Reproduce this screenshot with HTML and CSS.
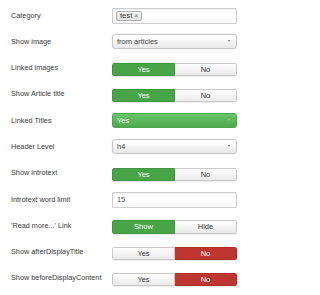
FILE: index.html
```html
<!DOCTYPE html>
<html>
<head>
<meta charset="utf-8">
<link rel="stylesheet" href="styles.css">
</head>
<body>
<div class="form">
  <div class="row">
    <div class="label">Category</div>
    <div class="control"><div class="input tags"><span class="tag">test <span class="x">×</span></span></div></div>
  </div>
  <div class="row">
    <div class="label">Show image</div>
    <div class="control"><div class="select">from articles<span class="caret"></span></div></div>
  </div>
  <div class="row">
    <div class="label">Linked images</div>
    <div class="control"><div class="toggle"><span class="btn yes-on">Yes</span><span class="btn off">No</span></div></div>
  </div>
  <div class="row">
    <div class="label">Show Article title</div>
    <div class="control"><div class="toggle"><span class="btn yes-on">Yes</span><span class="btn off">No</span></div></div>
  </div>
  <div class="row">
    <div class="label">Linked Titles</div>
    <div class="control"><div class="select green">Yes<span class="caret light"></span></div></div>
  </div>
  <div class="row">
    <div class="label">Header Level</div>
    <div class="control"><div class="select">h4<span class="caret"></span></div></div>
  </div>
  <div class="row">
    <div class="label">Show introtext</div>
    <div class="control"><div class="toggle"><span class="btn yes-on">Yes</span><span class="btn off">No</span></div></div>
  </div>
  <div class="row">
    <div class="label">Introtext word limit</div>
    <div class="control"><div class="input">15</div></div>
  </div>
  <div class="row">
    <div class="label">'Read more...' Link</div>
    <div class="control"><div class="toggle"><span class="btn yes-on">Show</span><span class="btn off">Hide</span></div></div>
  </div>
  <div class="row">
    <div class="label">Show afterDisplayTitle</div>
    <div class="control"><div class="toggle"><span class="btn off">Yes</span><span class="btn no-on">No</span></div></div>
  </div>
  <div class="row">
    <div class="label">Show beforeDisplayContent</div>
    <div class="control"><div class="toggle"><span class="btn off">Yes</span><span class="btn no-on">No</span></div></div>
  </div>
</div>
</body>
</html>
```
FILE: styles.css
```css
html, body {
  margin: 0;
  padding: 0;
  background: #fff;
}
.form {
  padding: 7.5px 13px 0 11px;
  font-family: "Liberation Sans", Arial, sans-serif;
  font-size: 7.3px;
  color: #3a3a3a;
}
.row {
  display: flex;
  height: 26.3px;
  align-items: flex-start;
}
.label {
  width: 101px;
  line-height: 15px;
  white-space: nowrap;
}
.control {
  width: 125px;
}
.input {
  box-sizing: border-box;
  height: 15.5px;
  border: 1px solid #ccc;
  border-radius: 1px;
  background: #fff;
  box-shadow: inset 0 1px 1px rgba(0,0,0,0.06);
  padding: 0 4px;
  line-height: 13.5px;
  font-size: 7.4px;
  color: #555;
  margin-top: 0.5px;
}
.tags {
  display: flex;
  align-items: center;
  padding: 0 3px;
  height: 16px;
}
.tag {
  display: inline-block;
  box-sizing: border-box;
  border: 1px solid #b0b0b0;
  border-radius: 2px;
  background: linear-gradient(#f6f6f6, #e2e2e2);
  padding: 0 3px;
  height: 10px;
  line-height: 8px;
  font-size: 7.6px;
  color: #333;
}
.tag .x {
  font-size: 6.5px;
  color: #666;
}
.select {
  position: relative;
  box-sizing: border-box;
  height: 15px;
  border: 1px solid #c6c6c6;
  border-radius: 3px;
  background: linear-gradient(#fff 20%, #f2f2f2 60%, #e8e8e8);
  box-shadow: 0 0 2px rgba(0,0,0,0.08);
  padding: 0 4px;
  line-height: 13px;
  font-size: 7.5px;
  color: #444;
}
.select.green {
  border-color: #4aa84a;
  background: linear-gradient(#6ac56a, #4fa84f);
  color: #fff;
  text-shadow: 0 -1px 0 rgba(0,0,0,0.2);
  box-shadow: none;
}
.caret {
  position: absolute;
  right: 6px;
  top: 5.5px;
  width: 0;
  height: 0;
  border-left: 1.5px solid transparent;
  border-right: 1.5px solid transparent;
  border-top: 2.5px solid #777;
}
.caret.light {
  border-top-color: rgba(255,255,255,0.35);
}
.toggle {
  display: flex;
  height: 13.5px;
  margin-top: 2.5px;
  border-radius: 2px;
  overflow: hidden;
  box-shadow: 0 1px 1px rgba(0,0,0,0.08);
}
.btn {
  box-sizing: border-box;
  flex: 1 1 0;
  text-align: center;
  line-height: 11.5px;
  font-size: 7.5px;
  border: 1px solid #ccc;
}
.btn:first-child {
  border-radius: 2px 0 0 2px;
}
.btn:last-child {
  border-radius: 0 2px 2px 0;
  border-left: none;
}
.btn.off {
  background: linear-gradient(#fff, #e9e9e9);
  color: #333;
  border-color: #c8c8c8;
}
.btn.yes-on {
  background: #47a447;
  border-color: #3f963f;
  color: #fff;
}
.btn.no-on {
  background: #bd362f;
  border-color: #ad2f29;
  color: #fff;
}
```
